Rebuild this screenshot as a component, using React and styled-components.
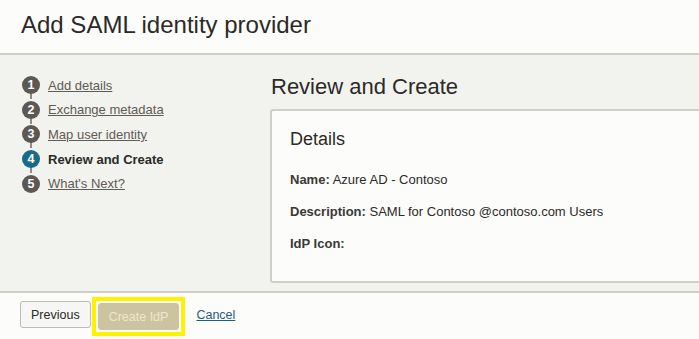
import React from 'react';
import styled, { createGlobalStyle } from 'styled-components';

const GlobalStyle = createGlobalStyle`
    html, body {
        margin: 0;
        padding: 0;
        background: #f2f2ee;
        font-family: "Liberation Sans", Arial, sans-serif;
        color: #2b2a27;
    }
`;

const Page = styled.div`
    width: 699px;
    height: 339px;
    display: flex;
    flex-direction: column;
    overflow: hidden;
`;

const Header = styled.header`
    height: 55px;
    flex-shrink: 0;
    background: #fcfcfa;
    border-bottom: 2px solid #cfcfca;
    box-sizing: border-box;
    display: flex;
    align-items: center;
    padding: 0 0 4px 21px;
`;

const PageTitle = styled.h1`
    margin: 0;
    font-size: 24px;
    font-weight: normal;
    color: #2b2a27;
`;

const Body = styled.div`
    flex: 1;
    display: flex;
    background: #f2f2ee;
    min-height: 0;
`;

const Steps = styled.ol`
    list-style: none;
    margin: 0;
    padding: 18px 0 0 22px;
    width: 248px;
    flex-shrink: 0;
    box-sizing: border-box;
`;

const Step = styled.li`
    position: relative;
    display: flex;
    align-items: center;
    gap: 8px;
    height: 24.6px;
    &:not(:last-child)::after {
        content: '';
        position: absolute;
        left: 8px;
        top: 16px;
        width: 2px;
        height: 10px;
        background: #8e8b85;
    }
`;

const StepNum = styled.span`
    width: 18px;
    height: 18px;
    border-radius: 50%;
    background: ${p => (p.$active ? '#1b6a8c' : '#5c5853')};
    color: #ffffff;
    font-size: 12.5px;
    font-weight: bold;
    display: flex;
    align-items: center;
    justify-content: center;
    flex-shrink: 0;
    position: relative;
    z-index: 1;
`;

const StepLink = styled.a`
    font-size: 13px;
    color: ${p => (p.$active ? '#2b2a27' : '#5f5b55')};
    font-weight: ${p => (p.$active ? 'bold' : 'normal')};
    text-decoration: ${p => (p.$active ? 'none' : 'underline')};
    cursor: pointer;
`;

const Main = styled.section`
    flex: 1;
    padding: 19px 0 0 23px;
    display: flex;
    flex-direction: column;
`;

const SectionTitle = styled.h2`
    margin: 0 0 9px;
    font-size: 22px;
    font-weight: normal;
    color: #2b2a27;
`;

const Card = styled.div`
    background: #fcfcfa;
    border: 2px solid #cfcfca;
    border-right: none;
    border-radius: 3px 0 0 3px;
    height: 174px;
    box-sizing: border-box;
    padding: 18px 0 0 18px;
    margin-left: -1px;
`;

const CardTitle = styled.h3`
    margin: 0 0 22px;
    font-size: 18px;
    font-weight: normal;
    color: #2b2a27;
`;

const Field = styled.p`
    margin: 0 0 16px;
    font-size: 13px;
    line-height: 16px;
    color: #2b2a27;
`;

const Label = styled.b`
    font-weight: bold;
    color: #3a3935;
`;

const Footer = styled.footer`
    height: 48px;
    flex-shrink: 0;
    background: #fcfcfa;
    border-top: 2px solid #cfcfca;
    box-sizing: border-box;
    display: flex;
    align-items: center;
    padding: 0 0 3px 20px;
`;

const Button = styled.button`
    font-family: "Liberation Sans", Arial, sans-serif;
    font-size: 12.5px;
    height: 27px;
    padding: 0 10px;
    border-radius: 3px;
    border: 1px solid ${p => (p.$primary ? '#ccc4a0' : '#bcbbb6')};
    background: ${p => (p.$primary ? '#ccc4a0' : '#f6f6f4')};
    color: ${p => (p.$primary ? '#ece7d2' : '#2b2a27')};
    cursor: ${p => (p.$primary ? 'default' : 'pointer')};
`;

const Highlight = styled.div`
    border: 4px solid #fff200;
    padding: 2px;
    margin: 4px 0 0 1px;
    display: flex;
`;

const CancelLink = styled.a`
    margin-left: 11px;
    font-size: 12.5px;
    color: #1f5d82;
    text-decoration: underline;
    cursor: pointer;
`;

const steps = ['Add details', 'Exchange metadata', 'Map user identity', 'Review and Create', "What's Next?"];
const current = 3;

const App = () => (
    <Page>
        <GlobalStyle />
        <Header>
            <PageTitle>Add SAML identity provider</PageTitle>
        </Header>
        <Body>
            <Steps>
                {steps.map((s, i) => (
                    <Step key={s}>
                        <StepNum $active={i === current}>{i + 1}</StepNum>
                        <StepLink $active={i === current}>{s}</StepLink>
                    </Step>
                ))}
            </Steps>
            <Main>
                <SectionTitle>Review and Create</SectionTitle>
                <Card>
                    <CardTitle>Details</CardTitle>
                    <Field><Label>Name:</Label> Azure AD - Contoso</Field>
                    <Field><Label>Description:</Label> SAML for Contoso @contoso.com Users</Field>
                    <Field><Label>IdP Icon:</Label></Field>
                </Card>
            </Main>
        </Body>
        <Footer>
            <Button>Previous</Button>
            <Highlight>
                <Button $primary>Create IdP</Button>
            </Highlight>
            <CancelLink>Cancel</CancelLink>
        </Footer>
    </Page>
);

export default App;
